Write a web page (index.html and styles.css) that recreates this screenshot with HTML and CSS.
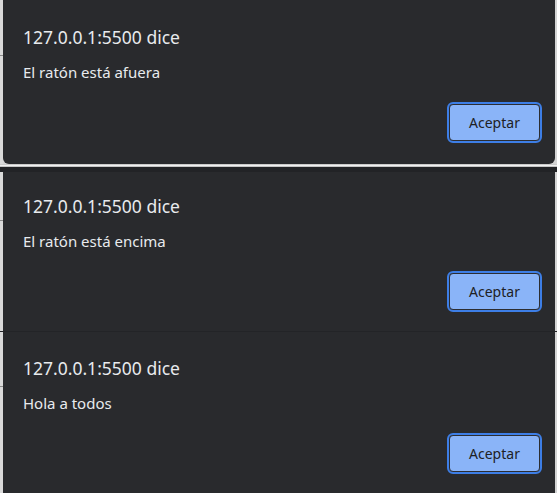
FILE: index.html
```html
<!DOCTYPE html>
<html lang="es">
<head>
<meta charset="utf-8">
<title>Alertas</title>
<link rel="stylesheet" href="styles.css">
</head>
<body>
  <div class="shot shot-first">
    <div class="page-strip"><span class="strip-line line-a"></span></div>
    <div class="dialog">
      <div class="title">127.0.0.1:5500 dice</div>
      <div class="message">El ratón está afuera</div>
      <div class="actions"><button class="btn">Aceptar</button></div>
    </div>
  </div>
  <div class="band"></div>
  <div class="gap"></div>
  <div class="shot shot-second">
    <div class="page-strip"><span class="strip-line line-b"></span></div>
    <div class="dialog">
      <div class="title">127.0.0.1:5500 dice</div>
      <div class="message">El ratón está encima</div>
      <div class="actions"><button class="btn">Aceptar</button></div>
    </div>
  </div>
  <div class="seam"></div>
  <div class="shot shot-third">
    <div class="page-strip"><span class="strip-line line-c"></span></div>
    <div class="dialog">
      <div class="title">127.0.0.1:5500 dice</div>
      <div class="message">Hola a todos</div>
      <div class="actions"><button class="btn">Aceptar</button></div>
    </div>
  </div>
</body>
</html>
```
FILE: styles.css
```css
html, body {
  margin: 0;
  padding: 0;
  background: #27282b;
  width: 557px;
  height: 493px;
  overflow: hidden;
  font-family: "Noto Sans", "Open Sans", sans-serif;
}

.shot {
  display: flex;
  background: #d4d4d4;
}

.shot-first { height: 164px; }
.shot-second { height: 159px; }
.shot-third { height: 162px; }

.page-strip {
  width: 3px;
  flex: none;
  background: #d9d9d9;
  display: flex;
  flex-direction: column;
}

.strip-line {
  display: block;
  height: 1px;
  background: #8a8a8a;
}
.line-a { margin-top: 55px; }
.line-b { margin-top: 48px; }
.line-c { margin-top: 54px; }

.dialog {
  flex: 1;
  margin-right: 2px;
  background: #292a2d;
  color: #e8eaed;
  padding: 0 15px 0 20px;
  display: flex;
  flex-direction: column;
}

.shot-first .dialog {
  border-radius: 0 0 6px 6px;
  padding-top: 25px;
}
.shot-second .dialog { padding-top: 22px; }
.shot-third .dialog { padding-top: 24px; }

.title {
  font-size: 17.5px;
  line-height: 24px;
}

.message {
  margin-top: 13px;
  font-size: 15px;
  line-height: 20px;
}

.actions {
  margin-top: 22px;
  display: flex;
  justify-content: flex-end;
}

.btn {
  width: 91px;
  height: 37px;
  background: #8ab4f8;
  color: #202124;
  border: 1px solid #2c2d31;
  border-radius: 4px;
  outline: 2px solid #3d7ee6;
  font-family: "Noto Sans", "Open Sans", sans-serif;
  font-size: 14px;
  padding: 0;
}

.band {
  height: 3px;
  background: linear-gradient(#b8b8b8, #f0f0f0, #b0b0b0);
}

.gap {
  height: 5px;
  background: #222326;
}

.seam {
  height: 1px;
  background: #232427;
}
```
